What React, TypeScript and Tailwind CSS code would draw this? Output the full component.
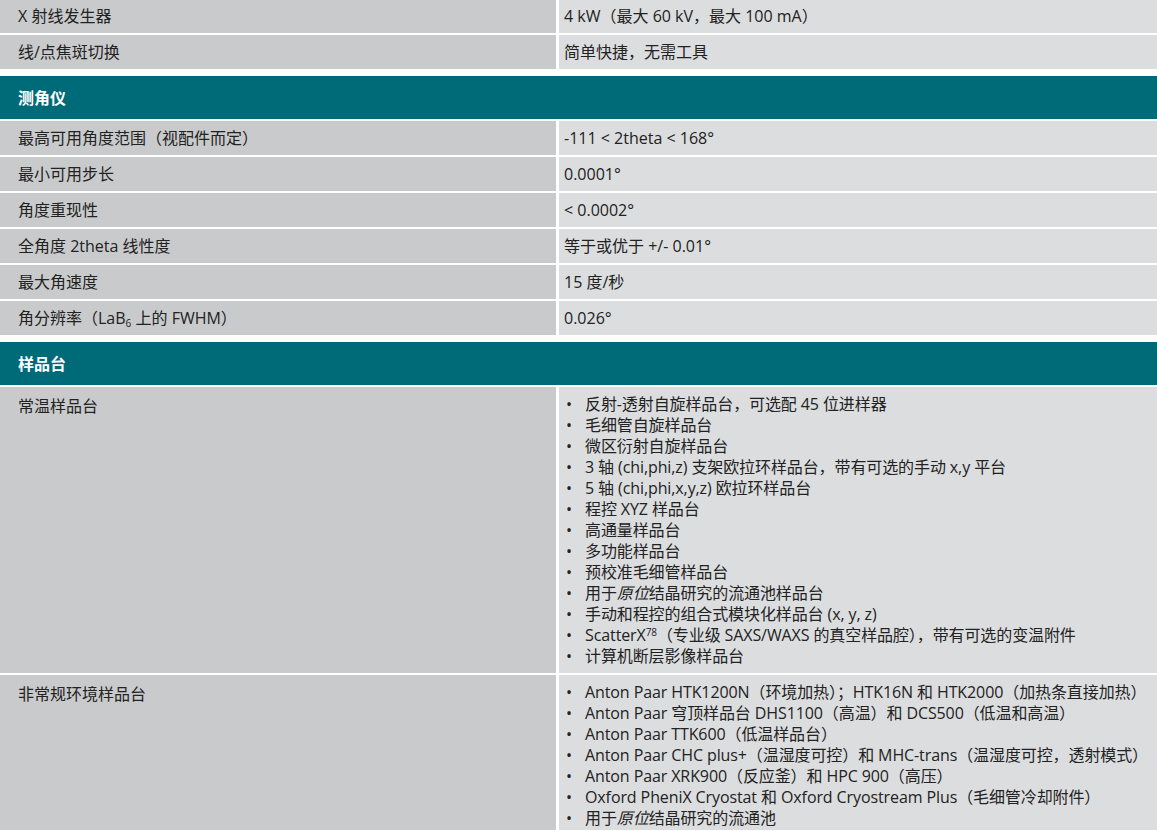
import React from "react";

const font = { fontFamily: '"Open Sans", "Noto Sans CJK SC", sans-serif' };

function Row({ left, right, tall }: { left: React.ReactNode; right: React.ReactNode; tall?: boolean }) {
  return (
    <div className="flex gap-[3px]">
      <div className={`w-[556px] shrink-0 bg-[#c9cacb] px-[18px] ${tall ? "pt-[7px] pb-[6px]" : "h-[34px] flex items-center"}`}>{left}</div>
      <div className={`flex-1 bg-[#dcdddf] pl-[5px] pr-[2px] ${tall ? "pt-[7px] pb-[6px]" : "h-[34px] flex items-center"}`}>{right}</div>
    </div>
  );
}

function Header({ title }: { title: string }) {
  return <div className="h-[43px] bg-[#006b78] text-white font-bold px-[18px] flex items-center">{title}</div>;
}

function Bullets({ items }: { items: React.ReactNode[] }) {
  return (
    <ul className="leading-[21px] tracking-[-0.1px]">
      {items.map((it, i) => (
        <li key={i} className="flex whitespace-nowrap">
          <span className="w-[21px] shrink-0 pl-[2px]">•</span>
          <span>{it}</span>
        </li>
      ))}
    </ul>
  );
}

export default function App() {
  const stages = [
    "反射-透射自旋样品台，可选配 45 位进样器",
    "毛细管自旋样品台",
    "微区衍射自旋样品台",
    "3 轴 (chi,phi,z) 支架欧拉环样品台，带有可选的手动 x,y 平台",
    "5 轴 (chi,phi,x,y,z) 欧拉环样品台",
    "程控 XYZ 样品台",
    "高通量样品台",
    "多功能样品台",
    "预校准毛细管样品台",
    <>用于<i>原位</i>结晶研究的流通池样品台</>,
    "手动和程控的组合式模块化样品台 (x, y, z)",
    <>ScatterX<sup className="text-[10px]">78</sup>（专业级 SAXS/WAXS 的真空样品腔），带有可选的变温附件</>,
    "计算机断层影像样品台",
  ];
  const env = [
    "Anton Paar HTK1200N（环境加热）；HTK16N 和 HTK2000（加热条直接加热）",
    "Anton Paar 穹顶样品台 DHS1100（高温）和 DCS500（低温和高温）",
    "Anton Paar TTK600（低温样品台）",
    "Anton Paar CHC plus+（温湿度可控）和 MHC-trans（温湿度可控，透射模式）",
    "Anton Paar XRK900（反应釜）和 HPC 900（高压）",
    "Oxford PheniX Cryostat 和 Oxford Cryostream Plus（毛细管冷却附件）",
    <>用于<i>原位</i>结晶研究的流通池</>,
  ];
  return (
    <div className="w-[1157px] h-[831px] overflow-hidden bg-white text-[16px] text-[#222] -mt-[1px]" style={font}>
      <div className="flex flex-col gap-[2px]">
        <Row left="X 射线发生器" right="4 kW（最大 60 kV，最大 100 mA）" />
        <Row left="线/点焦斑切换" right="简单快捷，无需工具" />
      </div>
      <div className="h-[7px]" />
      <div className="flex flex-col gap-[2px]">
        <Header title="测角仪" />
        <Row left="最高可用角度范围（视配件而定）" right="-111 < 2theta < 168°" />
        <Row left="最小可用步长" right="0.0001°" />
        <Row left="角度重现性" right="< 0.0002°" />
        <Row left="全角度 2theta 线性度" right="等于或优于 +/- 0.01°" />
        <Row left="最大角速度" right="15 度/秒" />
        <Row left={<span>角分辨率（LaB<sub className="text-[10px]">6</sub> 上的 FWHM）</span>} right="0.026°" />
      </div>
      <div className="h-[7px]" />
      <div className="flex flex-col gap-[2px]">
        <Header title="样品台" />
        <Row tall left="常温样品台" right={<Bullets items={stages} />} />
        <Row tall left="非常规环境样品台" right={<Bullets items={env} />} />
      </div>
    </div>
  );
}
